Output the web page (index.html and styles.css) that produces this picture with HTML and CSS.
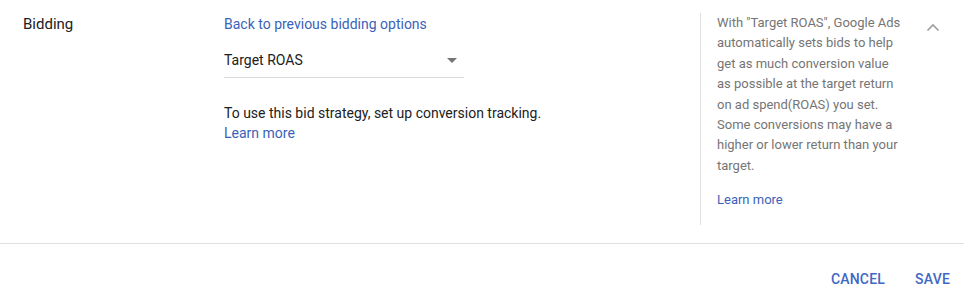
FILE: index.html
```html
<!DOCTYPE html>
<html>
<head>
<meta charset="utf-8">
<link rel="stylesheet" href="styles.css">
</head>
<body>
<div class="card">
  <div class="section">
    <div class="label">Bidding</div>
    <div class="main">
      <a class="link back">Back to previous bidding options</a>
      <div class="select">
        <span>Target ROAS</span>
        <svg class="arrow" width="10" height="5" viewBox="0 0 10 5"><path d="M0 0h10L5 5z" fill="#757575"/></svg>
      </div>
      <div class="note">To use this bid strategy, set up conversion tracking.<br><a class="link">Learn more</a></div>
    </div>
    <div class="help">
      <p class="help-text">With "Target ROAS", Google Ads automatically sets bids to help get as much conversion value as possible at the target return on ad spend(ROAS) you set. Some conversions may have a higher or lower return than your target.</p>
      <a class="link">Learn more</a>
    </div>
    <div class="toggle">
      <svg width="14" height="9" viewBox="0 0 14 9"><path d="M1.5 7.5L7 2l5.5 5.5" fill="none" stroke="#9e9e9e" stroke-width="1.6"/></svg>
    </div>
  </div>
  <div class="actions">
    <button class="btn">CANCEL</button>
    <button class="btn">SAVE</button>
  </div>
</div>
</body>
</html>
```
FILE: styles.css
```css
html, body { margin: 0; padding: 0; background: #fff; }
body { font-family: Roboto, "Noto Sans", sans-serif; font-size: 14px; line-height: 20px; color: #212121; }
.card { width: 964px; }
.section { display: flex; align-items: flex-start; padding-top: 14px; padding-bottom: 18px; border-bottom: 1px solid #e0e0e0; }
.label { width: 201px; padding-left: 23px; font-size: 15px; }
.main { width: 240px; display: flex; flex-direction: column; }
.link { color: #3b62b9; text-decoration: none; cursor: pointer; }
.select { margin-top: 16px; height: 27px; border-bottom: 1px solid #dadada; display: flex; justify-content: space-between; align-items: flex-start; }
.select span { display: block; }
.arrow { margin-top: 8px; margin-right: 7px; }
.note { margin-top: 25px; width: 340px; }
.help { margin-left: 236px; border-left: 1px solid #e0e0e0; padding-left: 16px; padding-right: 12px; width: 184px; height: 212px; margin-top: -1px; color: #757575; font-size: 13px; line-height: 20.4px; }
.help-text { margin: 0 0 14px; }
.help .link { display: block; }
.toggle { margin-left: 13px; padding-top: 3px; }
.actions { display: flex; justify-content: flex-end; gap: 6px; padding: 21px 2px 0 0; }
.btn { background: none; border: none; font-family: Roboto, sans-serif; font-weight: 500; font-size: 14px; color: #3f68c4; padding: 4px 12px; line-height: 20px; letter-spacing: 0.2px; }
```
